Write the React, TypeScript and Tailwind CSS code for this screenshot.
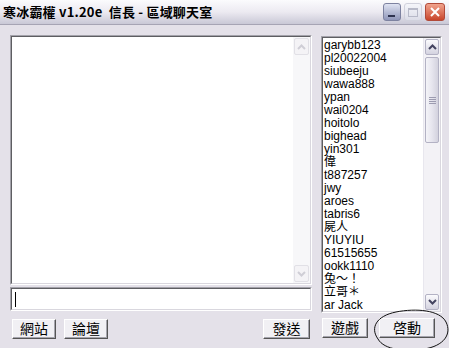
import React from 'react';

const users = [
  'garybb123', 'pl20022004', 'siubeeju', 'wawa888', 'ypan', 'wai0204', 'hoitolo', 'bighead',
  'yin301', '偉', 't887257', 'jwy', 'aroes', 'tabris6', '屍人', 'YIUYIU', '61515655',
  'ookk1110', '兔～！', '立哥＊', 'ar Jack',
];

const cjk = { fontFamily: '"Liberation Sans", "Noto Sans CJK TC", sans-serif' };

const Btn = ({ label, w = 'w-[44px]' }: { label: string; w?: string }) => (
  <button
    className={`${w} h-[20px] flex items-center justify-center bg-[#f1f0f4] border border-t-[#ffffff] border-l-[#ffffff] border-r-[#555555] border-b-[#555555] shadow-[inset_-1px_-1px_0_#a5a4ad] text-[14px] text-black leading-none`}
    style={cjk}
  >
    {label}
  </button>
);

const Chevron = ({ up, color }: { up?: boolean; color: string }) => (
  <svg width="9" height="6" viewBox="0 0 9 6">
    <path d={up ? 'M1 5 L4.5 1.5 L8 5' : 'M1 1 L4.5 4.5 L8 1'} fill="none" stroke={color} strokeWidth="2" />
  </svg>
);

const Sunken = ({ className, children }: { className: string; children?: React.ReactNode }) => (
  <div className={`border border-t-[#a3a2aa] border-l-[#a3a2aa] border-r-[#ffffff] border-b-[#ffffff] ${className}`}>
    <div className="h-full w-full border border-t-[#5e5e62] border-l-[#5e5e62] border-r-[#d9d7de] border-b-[#d9d7de] bg-white flex">
      {children}
    </div>
  </div>
);

export default function App() {
  return (
    <div className="relative w-[449px] h-[348px] bg-[#e4e1e9] overflow-hidden flex flex-col" style={cjk}>
      {/* title bar */}
      <div className="h-[25px] shrink-0 flex items-center justify-between pl-[3px] pr-[4px] bg-gradient-to-b from-[#fbfbfd] via-[#eceaf1] to-[#c9c8d6] border-b border-[#a6a4b4]">
        <span className="text-[13px] font-bold text-black tracking-[0.2px]" style={{ fontFamily: '"Noto Sans CJK TC", "DejaVu Sans", sans-serif' }}>
          寒冰霸權 v1.20e&nbsp; 信長 - 區域聊天室
        </span>
        <div className="flex items-center gap-[3px]">
          <div className="w-[18px] h-[18px] rounded-[3px] border border-[#7d82a0] bg-gradient-to-b from-[#dfe3f2] to-[#8f96b9] relative">
            <div className="absolute left-[4px] bottom-[3px] w-[7px] h-[2px] bg-[#2e3350]" />
          </div>
          <div className="w-[18px] h-[18px] rounded-[3px] border border-[#d0d1dc] bg-gradient-to-b from-[#f4f5fa] to-[#dcdde8] flex items-center justify-center">
            <div className="w-[10px] h-[9px] border border-[#b7b9c8] border-t-2" />
          </div>
          <div className="w-[20px] h-[18px] rounded-[3px] border border-[#b14a39] bg-gradient-to-b from-[#f0a38d] to-[#c8442a] flex items-center justify-center">
            <svg width="10" height="10" viewBox="0 0 10 10">
              <path d="M1 1 L9 9 M9 1 L1 9" stroke="white" strokeWidth="2" />
            </svg>
          </div>
        </div>
      </div>

      {/* body */}
      <div className="flex pt-[10px] pl-[10px] gap-[9px]">
        <div className="flex flex-col w-[302px]">
          <Sunken className="h-[250px]">
            <div className="flex-1" />
            <div className="w-[17px] flex flex-col bg-[#f7f7f9]">
              <div className="h-[17px] m-[1px] border border-[#e1e0e6] rounded-[2px] bg-[#f4f3f6] flex items-center justify-center">
                <Chevron up color="#cfced6" />
              </div>
              <div className="flex-1" />
              <div className="h-[17px] m-[1px] border border-[#e1e0e6] rounded-[2px] bg-[#f4f3f6] flex items-center justify-center">
                <Chevron color="#cfced6" />
              </div>
            </div>
          </Sunken>
          <Sunken className="h-[24px] mt-[2px]">
            <div className="ml-[3px] mt-[3px] w-[1px] h-[15px] bg-black" />
          </Sunken>
          <div className="flex mt-[8px] pl-[2px] gap-[8px]">
            <Btn label="網站" />
            <Btn label="論壇" />
            <div className="flex-1" />
            <div className="mr-[2px]"><Btn label="發送" w="w-[47px]" /></div>
          </div>
        </div>

        <div className="flex flex-col w-[121px]">
          <Sunken className="h-[277px] mt-[1px]">
            <div className="flex-1 overflow-hidden pl-[1px] pt-[1px]">
              {users.map((u) => (
                <div key={u} className="h-[13px] text-[12px] leading-[13px] text-black whitespace-nowrap">
                  {u}
                </div>
              ))}
            </div>
            <div className="w-[17px] flex flex-col bg-[#f3f2f6] border-l border-[#e8e7ee]">
              <div className="h-[16px] m-[1px] border border-[#b3b2c4] rounded-[2px] bg-gradient-to-b from-[#fbfbfd] to-[#d4d3e0] flex items-center justify-center">
                <Chevron up color="#444460" />
              </div>
              <div className="h-[86px] mx-[1px] mt-[1px] border border-[#b3b2c4] rounded-[2px] bg-gradient-to-r from-[#f4f4f8] via-[#e6e5ee] to-[#d3d2de] flex flex-col items-center justify-center gap-[1px]">
                <div className="w-[7px] h-[1px] bg-[#9c9bb0]" />
                <div className="w-[7px] h-[1px] bg-[#9c9bb0]" />
                <div className="w-[7px] h-[1px] bg-[#9c9bb0]" />
                <div className="w-[7px] h-[1px] bg-[#9c9bb0]" />
              </div>
              <div className="flex-1" />
              <div className="h-[16px] m-[1px] border border-[#b3b2c4] rounded-[2px] bg-gradient-to-b from-[#fbfbfd] to-[#d4d3e0] flex items-center justify-center">
                <Chevron color="#444460" />
              </div>
            </div>
          </Sunken>
          <div className="flex mt-[5px] pl-[1px] gap-[11px]">
            <Btn label="遊戲" w="w-[46px]" />
            <Btn label="啓動" w="w-[56px]" />
          </div>
        </div>
      </div>

      {/* hand-drawn circle */}
      <svg className="absolute left-[368px] top-[306px]" width="84" height="46" viewBox="0 0 84 46">
        <path
          d="M10 33 C2 22 8 10 28 6 C48 2 72 4 78 16 C84 28 76 40 56 43 C38 46 16 44 10 33"
          fill="none"
          stroke="#111"
          strokeWidth="1"
        />
      </svg>
    </div>
  );
}
